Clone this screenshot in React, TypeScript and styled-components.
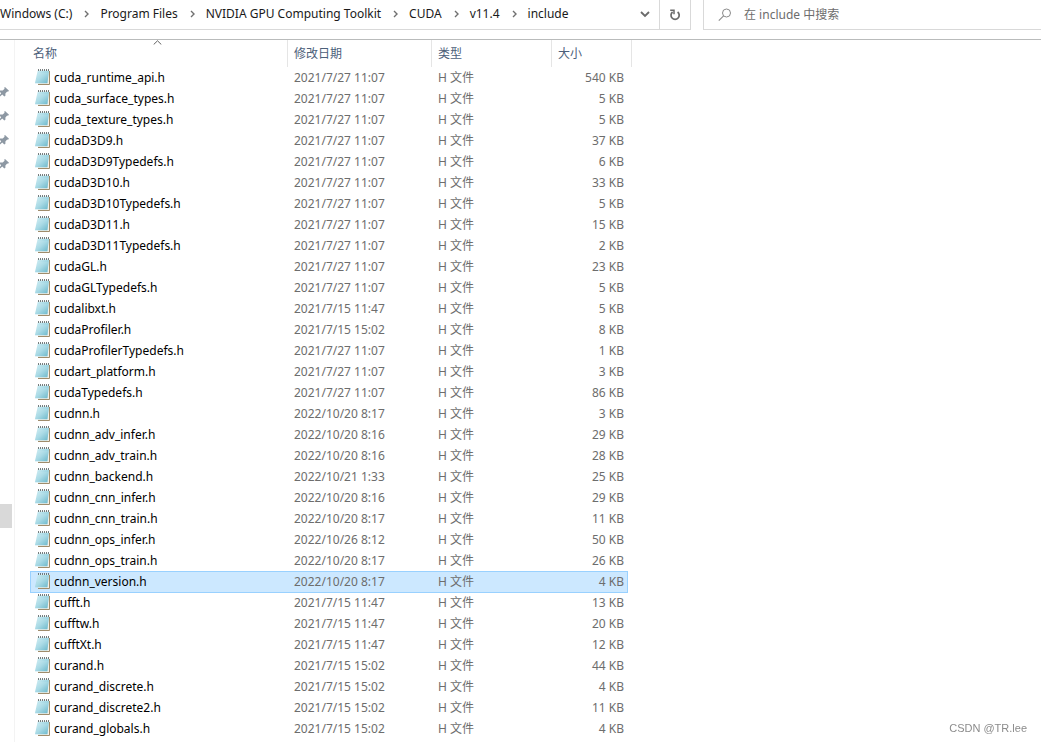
import React from "react";
import styled, { createGlobalStyle } from "styled-components";

const GlobalStyle = createGlobalStyle`
  * { box-sizing: border-box; }
  body {
    margin: 0;
    background: #fff;
    color: #000;
    font-family: "Noto Sans", "Noto Sans CJK SC", sans-serif;
    font-size: 12px;
    line-height: 16px;
  }
`;

const Window = styled.div`
  display: flex;
  flex-direction: column;
  height: 100vh;
  overflow: hidden;
`;

const Toolbar = styled.header`
  display: flex;
  flex: none;
  height: 40px;
  padding-bottom: 9px;
  border-bottom: 1px solid #b9bbbb;
`;

const AddressBar = styled.div`
  display: flex;
  flex: 0 0 691px;
  border: solid #d9d9d9;
  border-width: 0 1px 1px 0;
`;

const Breadcrumbs = styled.nav`
  display: flex;
  flex: 1;
  align-items: center;
  white-space: nowrap;
  padding-bottom: 1px;
`;

const Crumb = styled.a`
  color: #1a1a1a;
  text-decoration: none;
`;

const CrumbArrow = styled.svg`
  flex: none;
  width: 5px;
  height: 8px;
  margin: 0 11px 0 12px;
`;

const BarButton = styled.button<{ $divided?: boolean }>`
  display: flex;
  align-items: center;
  justify-content: center;
  width: ${(p) => (p.$divided ? "31px" : "28px")};
  padding: 0;
  border: 0;
  border-left: ${(p) => (p.$divided ? "1px solid #d9d9d9" : "0")};
  background: none;
`;

const SearchBox = styled.label`
  display: flex;
  flex: 1;
  align-items: center;
  gap: 12px;
  margin-left: 12px;
  padding-left: 14px;
  border: solid #d9d9d9;
  border-width: 0 0 1px 1px;
`;

const SearchInput = styled.input`
  flex: 1;
  min-width: 0;
  padding: 0;
  border: 0;
  outline: 0;
  background: none;
  font: inherit;
  &::placeholder { color: #6d6d6d; opacity: 1; }
`;

const Body = styled.div`
  display: flex;
  flex: 1;
  min-height: 0;
`;

const Sidebar = styled.aside`
  flex: 0 0 15px;
  padding-top: 40px;
  border-right: 1px solid #f3f3f3;
`;

const PinSlot = styled.div`
  display: flex;
  align-items: center;
  height: 24px;
`;

const CurrentPlace = styled.div`
  width: 12px;
  height: 24px;
  margin-top: 328px;
  background: #d9d9d9;
`;

const FilePane = styled.main`
  flex: 1;
  padding-left: 15px;
  overflow: hidden;
`;

const FileTable = styled.table`
  table-layout: fixed;
  width: 602px;
  border-collapse: separate;
  border-spacing: 0;
`;

const Heading = styled.th<{ $first?: boolean }>`
  position: relative;
  height: 27px;
  padding: ${(p) => (p.$first ? "0 3px" : "0 6px")};
  border-right: 1px solid #e5e5e5;
  color: #4c607a;
  font-weight: 400;
  text-align: left;
`;

const SortMark = styled.svg`
  position: absolute;
  top: 0;
  left: 50%;
  width: 9px;
  height: 5px;
  margin-left: -6px;
`;

const Row = styled.tr<{ $selected: boolean }>`
  --line: ${(p) => (p.$selected ? "#99d1ff" : "transparent")};
  --fill: ${(p) => (p.$selected ? "#cce8ff" : "transparent")};
`;

const Cell = styled.td<{ $kind?: "name" | "size" }>`
  height: 21px;
  padding: ${(p) => (p.$kind === "name" ? "0 4px" : p.$kind === "size" ? "0 3px 1px" : "0 6px 1px")};
  border: solid var(--line);
  border-width: 1px ${(p) => (p.$kind === "size" ? "1px" : "0")} 0 ${(p) => (p.$kind === "name" ? "1px" : "0")};
  background: var(--fill);
  box-shadow: 0 1px var(--line);
  color: #6d6d6d;
  text-align: ${(p) => (p.$kind === "size" ? "right" : "left")};
  white-space: nowrap;
`;

const FileName = styled.div`
  display: flex;
  align-items: center;
  gap: 3px;
  height: 19px;
  margin-bottom: 1px;
  color: #000;
`;

const Margin = styled.td`
  padding: 0;
`;

const Watermark = styled.footer`
  position: fixed;
  right: 14px;
  bottom: 6px;
  color: #8c8c8c;
  font-family: "Liberation Sans", sans-serif;
  font-size: 11px;
`;

const ChevronRight = () => (
  <CrumbArrow viewBox="0 0 5 8" aria-hidden="true">
    <path d="M1 1l3 3-3 3" fill="none" stroke="#707070" strokeWidth="1.4" />
  </CrumbArrow>
);

const PinIcon = () => (
  <svg width="9" height="10" viewBox="0 0 9 10" aria-hidden="true">
    <path d="M5 0L9 3.8 8 4.8 7.2 4.6 5.4 6.4 5.4 8.8 4.3 9.4 2.3 7.4 0 9.6V7.8L1.2 6.3 0 5V3.4L2.7 3.6 4.6 1.8 4.2.8z" fill="#8d98a3" />
  </svg>
);

const NotepadIcon = () => (
  <svg width="16" height="18" viewBox="0 0 16 18" aria-hidden="true">
    <defs>
      <linearGradient id="page" x1="0" y1="0" x2="1" y2="1">
        <stop offset="0" stopColor="#d3eff5" />
        <stop offset="0.5" stopColor="#9fd5e2" />
        <stop offset="1" stopColor="#4fa9c0" />
      </linearGradient>
    </defs>
    <path d="M4 2H14.5V15.5H3z" fill="#f4f1e9" />
    <path d="M14.5 2V15.5H3" fill="none" stroke="#a08c6b" />
    <path d="M2.6 2H14L12.4 14.2H0z" fill="url(#page)" />
    <path d="M2.2 5H13.4M1.8 7H13.1M1.4 9H12.9M1 11H12.6M.6 13H12.4" stroke="#d5eff4" strokeWidth="0.4" />
    <path d="M2.8 1.5H14" stroke="#e3f0f2" />
    <path d="M3 1H14" stroke="#4c5557" strokeWidth="1.4" strokeDasharray="1 1" />
  </svg>
);

const crumbs = ["Windows (C:)", "Program Files", "NVIDIA GPU Computing Toolkit", "CUDA", "v11.4", "include"];

const files: [string, string, number][] = [
  ["cuda_runtime_api.h", "2021/7/27 11:07", 540],
  ["cuda_surface_types.h", "2021/7/27 11:07", 5],
  ["cuda_texture_types.h", "2021/7/27 11:07", 5],
  ["cudaD3D9.h", "2021/7/27 11:07", 37],
  ["cudaD3D9Typedefs.h", "2021/7/27 11:07", 6],
  ["cudaD3D10.h", "2021/7/27 11:07", 33],
  ["cudaD3D10Typedefs.h", "2021/7/27 11:07", 5],
  ["cudaD3D11.h", "2021/7/27 11:07", 15],
  ["cudaD3D11Typedefs.h", "2021/7/27 11:07", 2],
  ["cudaGL.h", "2021/7/27 11:07", 23],
  ["cudaGLTypedefs.h", "2021/7/27 11:07", 5],
  ["cudalibxt.h", "2021/7/15 11:47", 5],
  ["cudaProfiler.h", "2021/7/15 15:02", 8],
  ["cudaProfilerTypedefs.h", "2021/7/27 11:07", 1],
  ["cudart_platform.h", "2021/7/27 11:07", 3],
  ["cudaTypedefs.h", "2021/7/27 11:07", 86],
  ["cudnn.h", "2022/10/20 8:17", 3],
  ["cudnn_adv_infer.h", "2022/10/20 8:16", 29],
  ["cudnn_adv_train.h", "2022/10/20 8:16", 28],
  ["cudnn_backend.h", "2022/10/21 1:33", 25],
  ["cudnn_cnn_infer.h", "2022/10/20 8:16", 29],
  ["cudnn_cnn_train.h", "2022/10/20 8:17", 11],
  ["cudnn_ops_infer.h", "2022/10/26 8:12", 50],
  ["cudnn_ops_train.h", "2022/10/20 8:17", 26],
  ["cudnn_version.h", "2022/10/20 8:17", 4],
  ["cufft.h", "2021/7/15 11:47", 13],
  ["cufftw.h", "2021/7/15 11:47", 20],
  ["cufftXt.h", "2021/7/15 11:47", 12],
  ["curand.h", "2021/7/15 15:02", 44],
  ["curand_discrete.h", "2021/7/15 15:02", 4],
  ["curand_discrete2.h", "2021/7/15 15:02", 11],
  ["curand_globals.h", "2021/7/15 15:02", 4],
];

export default function App() {
  return (
    <>
      <GlobalStyle />
      <Window>
        <Toolbar>
          <AddressBar>
            <Breadcrumbs aria-label="Path">
              {crumbs.map((name, i) => (
                <React.Fragment key={name}>
                  {i > 0 && <ChevronRight />}
                  <Crumb href="#">{name}</Crumb>
                </React.Fragment>
              ))}
            </Breadcrumbs>
            <BarButton aria-label="Previous locations">
              <svg width="10" height="7" viewBox="0 0 10 7">
                <path d="M1 1l4 4 4-4" fill="none" stroke="#6a6a6a" strokeWidth="1.8" />
              </svg>
            </BarButton>
            <BarButton $divided aria-label="Refresh">
              <svg width="12" height="12" viewBox="0 0 12 12">
                <path d="M8.6 3A4.1 4.1 0 1 1 3.6 3" fill="none" stroke="#6a6a6a" strokeWidth="1.7" />
                <path d="M1.2 1.2H5V5.2" fill="none" stroke="#6a6a6a" strokeWidth="1.5" />
              </svg>
            </BarButton>
          </AddressBar>
          <SearchBox>
            <svg width="14" height="14" viewBox="0 0 14 14" aria-hidden="true">
              <circle cx="8.5" cy="5" r="4" fill="none" stroke="#8a8a8a" />
              <path d="M5.6 7.9L.8 12.7" stroke="#8a8a8a" strokeWidth="1.1" />
            </svg>
            <SearchInput type="text" aria-label="在 include 中搜索" placeholder="在 include 中搜索" />
          </SearchBox>
        </Toolbar>
        <Body>
          <Sidebar>
            {[0, 1, 2, 3].map((n) => (
              <PinSlot key={n}>
                <PinIcon />
              </PinSlot>
            ))}
            <CurrentPlace />
          </Sidebar>
          <FilePane>
            <FileTable>
              <colgroup>
                <col width="258" />
                <col width="144" />
                <col width="120" />
                <col width="76" />
                <col width="4" />
              </colgroup>
              <thead>
                <tr>
                  <Heading $first>
                    名称
                    <SortMark viewBox="0 0 9 5" aria-hidden="true">
                      <path d="M.7 4.5L4.5.8l3.8 3.7" fill="none" stroke="#606060" />
                    </SortMark>
                  </Heading>
                  <Heading>修改日期</Heading>
                  <Heading>类型</Heading>
                  <Heading colSpan={2}>大小</Heading>
                </tr>
              </thead>
              <tbody>
                {files.map(([name, date, size]) => (
                  <Row key={name} $selected={name === "cudnn_version.h"}>
                    <Cell $kind="name">
                      <FileName>
                        <NotepadIcon />
                        {name}
                      </FileName>
                    </Cell>
                    <Cell>{date}</Cell>
                    <Cell>H 文件</Cell>
                    <Cell $kind="size">{size} KB</Cell>
                    <Margin />
                  </Row>
                ))}
              </tbody>
            </FileTable>
          </FilePane>
        </Body>
        <Watermark>CSDN @TR.lee</Watermark>
      </Window>
    </>
  );
}
